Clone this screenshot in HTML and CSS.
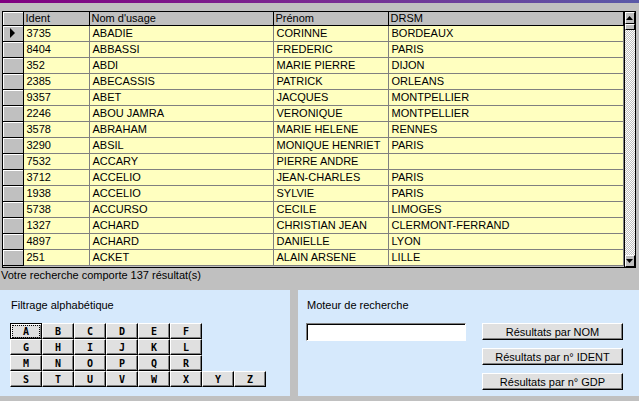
FILE: index.html
```html
<!DOCTYPE html>
<html lang="fr">
<head>
<meta charset="utf-8">
<title>Recherche</title>
<link rel="stylesheet" href="styles.css">
</head>
<body>
<div class="topbar"></div>
<div class="grid">
  <table class="sheet">
    <colgroup>
      <col class="c-sel"><col class="c-id"><col class="c-nom"><col class="c-pre"><col class="c-drsm">
    </colgroup>
    <thead>
      <tr><th class="sel"></th><th>Ident</th><th>Nom d'usage</th><th>Prénom</th><th>DRSM</th></tr>
    </thead>
    <tbody>
      <tr><td class="sel"><span class="cur"></span></td><td>3735</td><td>ABADIE</td><td>CORINNE</td><td>BORDEAUX</td></tr>
      <tr><td class="sel"></td><td>8404</td><td>ABBASSI</td><td>FREDERIC</td><td>PARIS</td></tr>
      <tr><td class="sel"></td><td>352</td><td>ABDI</td><td>MARIE PIERRE</td><td>DIJON</td></tr>
      <tr><td class="sel"></td><td>2385</td><td>ABECASSIS</td><td>PATRICK</td><td>ORLEANS</td></tr>
      <tr><td class="sel"></td><td>9357</td><td>ABET</td><td>JACQUES</td><td>MONTPELLIER</td></tr>
      <tr><td class="sel"></td><td>2246</td><td>ABOU JAMRA</td><td>VERONIQUE</td><td>MONTPELLIER</td></tr>
      <tr><td class="sel"></td><td>3578</td><td>ABRAHAM</td><td>MARIE HELENE</td><td>RENNES</td></tr>
      <tr><td class="sel"></td><td>3290</td><td>ABSIL</td><td>MONIQUE HENRIET</td><td>PARIS</td></tr>
      <tr><td class="sel"></td><td>7532</td><td>ACCARY</td><td>PIERRE ANDRE</td><td></td></tr>
      <tr><td class="sel"></td><td>3712</td><td>ACCELIO</td><td>JEAN-CHARLES</td><td>PARIS</td></tr>
      <tr><td class="sel"></td><td>1938</td><td>ACCELIO</td><td>SYLVIE</td><td>PARIS</td></tr>
      <tr><td class="sel"></td><td>5738</td><td>ACCURSO</td><td>CECILE</td><td>LIMOGES</td></tr>
      <tr><td class="sel"></td><td>1327</td><td>ACHARD</td><td>CHRISTIAN JEAN</td><td>CLERMONT-FERRAND</td></tr>
      <tr><td class="sel"></td><td>4897</td><td>ACHARD</td><td>DANIELLE</td><td>LYON</td></tr>
      <tr><td class="sel"></td><td>251</td><td>ACKET</td><td>ALAIN ARSENE</td><td>LILLE</td></tr>
    </tbody>
  </table>
  <div class="vscroll">
    <div class="sbtn"><svg width="7" height="4" viewBox="0 0 7 4"><path d="M3.5 0L7 4H0Z" fill="#000"/></svg></div>
    <div class="thumb"></div>
    <div class="track"></div>
    <div class="sbtn"><svg width="7" height="4" viewBox="0 0 7 4"><path d="M0 0H7L3.5 4Z" fill="#000"/></svg></div>
  </div>
</div>
<div class="status">Votre recherche comporte 137 résultat(s)</div>
<div class="panels">
  <div class="panel left">
    <div class="ptitle">Filtrage alphabétique</div>
    <div class="letters">
      <div class="lrow"><button class="lbtn default"><span class="focus">A</span></button><button class="lbtn">B</button><button class="lbtn">C</button><button class="lbtn">D</button><button class="lbtn">E</button><button class="lbtn">F</button></div>
      <div class="lrow"><button class="lbtn">G</button><button class="lbtn">H</button><button class="lbtn">I</button><button class="lbtn">J</button><button class="lbtn">K</button><button class="lbtn">L</button></div>
      <div class="lrow"><button class="lbtn">M</button><button class="lbtn">N</button><button class="lbtn">O</button><button class="lbtn">P</button><button class="lbtn">Q</button><button class="lbtn">R</button></div>
      <div class="lrow"><button class="lbtn">S</button><button class="lbtn">T</button><button class="lbtn">U</button><button class="lbtn">V</button><button class="lbtn">W</button><button class="lbtn">X</button><button class="lbtn">Y</button><button class="lbtn">Z</button></div>
    </div>
  </div>
  <div class="panel right">
    <div class="ptitle">Moteur de recherche</div>
    <div class="search">
      <input class="field" type="text">
      <div class="actions">
        <button class="abtn">Résultats par NOM</button>
        <button class="abtn">Résultats par n° IDENT</button>
        <button class="abtn">Résultats par n° GDP</button>
      </div>
    </div>
  </div>
</div>
</body>
</html>
```
FILE: styles.css
```css
* { box-sizing: border-box; }
html, body { margin: 0; padding: 0; }
body {
  width: 639px;
  height: 401px;
  overflow: hidden;
  background: #c0c0c0;
  font-family: "Liberation Sans", Arial, sans-serif;
  font-size: 11px;
  color: #000;
}
.topbar {
  height: 3px;
  background: linear-gradient(90deg, #800080, #7a2a92 50%, #5a5aa8);
}
.grid {
  display: flex;
  margin: 8px 0 0 2px;
  width: 634px;
  height: 257px;
  border: 1px solid #000;
  background: #c0c0c0;
}
.sheet {
  border-collapse: collapse;
  table-layout: fixed;
  width: 620px;
  height: 0;
}
.c-sel { width: 20px; }
.c-id { width: 66px; }
.c-nom { width: 184px; }
.c-pre { width: 115px; }
.c-drsm { width: 235px; }
.sheet th {
  height: 13px;
  padding: 0 2px;
  background: #c0c0c0;
  font-weight: normal;
  text-align: left;
  line-height: 12px;
  border-right: 1px solid #000;
  border-bottom: 1px solid #000;
  white-space: nowrap;
}
.sheet td {
  height: 16px;
  padding: 0 2px 0 3px;
  background: #ffffc0;
  line-height: 15px;
  border-right: 1px solid #808080;
  border-bottom: 1px solid #808080;
  white-space: nowrap;
  overflow: hidden;
}
.sheet td.sel, .sheet th.sel {
  background: #c0c0c0;
  border-right: 1px solid #000;
  padding: 0;
  box-shadow: inset 1px 1px #fff;
}
.sheet td.sel { border-bottom: 1px solid #000; }
.cur {
  display: block;
  width: 0; height: 0;
  margin-left: 7px;
  border-top: 5px solid transparent;
  border-bottom: 5px solid transparent;
  border-left: 5px solid #000;
}
.vscroll {
  width: 12px;
  margin-left: auto;
  display: flex;
  flex-direction: column;
  border-left: 1px solid #000;
}
.sbtn {
  height: 12px;
  background: #c0c0c0;
  border-top: 1px solid #fff;
  border-left: 1px solid #fff;
  border-right: 1px solid #000;
  border-bottom: 1px solid #000;
  display: flex;
  align-items: center;
  justify-content: center;
}
.sbtn svg { display: block; }
.thumb {
  height: 6px;
  background: #c0c0c0;
  border-top: 1px solid #fff;
  border-left: 1px solid #fff;
  border-right: 1px solid #000;
  border-bottom: 1px solid #000;
}
.track {
  flex: 1;
  background-color: #c0c0c0;
  background-image: conic-gradient(#fff 25%, #c0c0c0 0 50%, #fff 0 75%, #c0c0c0 0);
  background-size: 2px 2px;
}
.status {
  margin: 1px 0 0 1px;
  height: 21px;
  line-height: 13px;
  white-space: nowrap;
}
.panels {
  display: flex;
  gap: 8px;
  height: 106px;
}
.panel {
  background: #d6e9fc;
}
.panel.left {
  width: 290px;
  padding: 9px 0 0 10px;
}
.panel.right {
  flex: 1;
  padding: 9px 0 0 8px;
}
.ptitle {
  height: 24px;
  line-height: 13px;
  padding-left: 1px;
  white-space: nowrap;
}
.letters { display: flex; flex-direction: column; }
.lrow { display: flex; }
.lbtn {
  width: 32px;
  height: 16px;
  margin: 0;
  padding: 0;
  background: #e0e0e0;
  border-top: 1px solid #fff;
  border-left: 1px solid #fff;
  border-right: 1px solid #000;
  border-bottom: 1px solid #000;
  box-shadow: inset -1px -1px #808080;
  font-family: "DejaVu Sans Mono", monospace;
  font-weight: bold;
  font-size: 10px;
  line-height: 13px;
  color: #000;
  display: flex;
  align-items: center;
  justify-content: center;
}
.lbtn.default {
  border: 1px solid #000;
  box-shadow: inset 1px 1px #fff, inset -1px -1px #808080;
}
.focus {
  display: block;
  width: 26px;
  height: 11px;
  line-height: 11px;
  text-align: center;
  outline: 1px dotted #000;
}
.search {
  display: flex;
  align-items: flex-start;
}
.field {
  width: 160px;
  height: 18px;
  margin: 0;
  padding: 0 2px;
  background: #fff;
  border-top: 1px solid #808080;
  border-left: 1px solid #808080;
  border-right: 1px solid #fff;
  border-bottom: 1px solid #fff;
  box-shadow: inset 1px 1px #000;
  font: inherit;
}
.actions {
  display: flex;
  flex-direction: column;
  gap: 8px;
  margin-left: 16px;
}
.abtn {
  width: 141px;
  height: 17px;
  margin: 0;
  padding: 0;
  background: #e0e0e0;
  border-top: 1px solid #fff;
  border-left: 1px solid #fff;
  border-right: 1px solid #000;
  border-bottom: 1px solid #000;
  box-shadow: inset -1px -1px #808080;
  font-family: "Liberation Sans", Arial, sans-serif;
  font-size: 11px;
  line-height: 14px;
  color: #000;
  text-align: center;
}
```
